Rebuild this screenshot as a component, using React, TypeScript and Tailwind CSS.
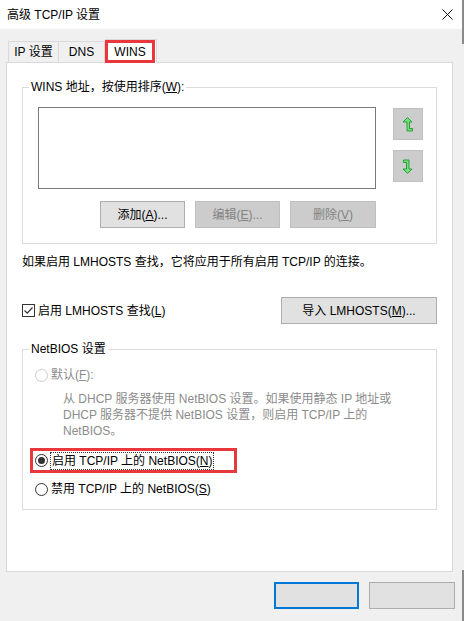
import React from 'react';

const font = "font-['Liberation_Sans','Noto_Sans_CJK_SC',sans-serif]";

// small win32-ish controls
const Radio = ({ checked = false, disabled = false }: { checked?: boolean; disabled?: boolean }) => (
  <span
    className={`flex h-[13px] w-[13px] shrink-0 items-center justify-center rounded-full border bg-white ${
      disabled ? 'border-[#cccccc]' : 'border-[#333333]'
    }`}
  >
    {checked && <span className="h-[7px] w-[7px] rounded-full bg-[#333333]" />}
  </span>
);

const Checkbox = () => (
  <span className="flex h-[13px] w-[13px] shrink-0 items-center justify-center border border-[#333333] bg-white">
    <svg width="11" height="11" viewBox="0 0 11 11" fill="none">
      <path d="M1.5 5.5L4.2 8.2L9.5 2.5" stroke="#333333" strokeWidth="1.2" />
    </svg>
  </span>
);

const Btn = ({
  children,
  disabled = false,
  className = '',
}: {
  children?: React.ReactNode;
  disabled?: boolean;
  className?: string;
}) => (
  <div
    className={`flex h-[27px] items-center justify-center border text-[12px] ${
      disabled ? 'border-[#bfbfbf] bg-[#cccccc] text-[#838383]' : 'border-[#adadad] bg-[#e1e1e1] text-black'
    } ${className}`}
  >
    {children}
  </div>
);

const UpArrow = () => (
  <svg width="12" height="17" viewBox="0 0 12 17">
    <path
      d="M5.5 1.5L10 6H7.5V12.5H10.5V15H5V6H1Z"
      fill="#6fe07a"
      stroke="#2f9d3b"
      strokeWidth="1"
      strokeLinejoin="miter"
    />
  </svg>
);

const DownArrow = () => (
  <svg width="12" height="17" viewBox="0 0 12 17">
    <path
      d="M1.5 2H7V11H10L5.5 15.5L1 11H4.5V4.5H1.5Z"
      fill="#6fe07a"
      stroke="#2f9d3b"
      strokeWidth="1"
      strokeLinejoin="miter"
    />
  </svg>
);

export default function App() {
  return (
    <div className={`relative h-[621px] w-[464px] overflow-hidden bg-[#f0f0f0] text-[12px] text-black ${font}`}>
      {/* window edge bits */}
      <span className="absolute right-0 top-0 h-[44px] w-[2px] bg-[#8a8a8a]" />
      <span className="absolute bottom-0 right-0 h-[51px] w-[2px] bg-[#8a8a8a]" />

      {/* title bar */}
      <div className="flex h-[29px] items-center justify-between bg-white pl-[7px] pr-[11px]">
        <span className="leading-[16px]">高级 TCP/IP 设置</span>
        <svg width="11" height="11" viewBox="0 0 11 11">
          <path d="M0.5 0.5L10.5 10.5M10.5 0.5L0.5 10.5" stroke="#111111" strokeWidth="1" />
        </svg>
      </div>

      {/* tabs */}
      <div className="mt-[10px] flex h-[23px] items-end pl-[8px]">
        <div className="flex h-[21px] w-[51px] items-center justify-center border border-b-0 border-[#d9d9d9]">
          IP 设置
        </div>
        <div className="flex h-[21px] w-[46px] items-center justify-center border border-b-0 border-l-0 border-[#d9d9d9]">
          DNS
        </div>
        <div className="relative z-10 -mb-px flex h-[24px] w-[52px] items-start border border-b-0 border-l-0 border-[#d9d9d9] bg-white">
          <div className="flex h-[23px] w-[50px] items-center justify-center border-[3px] border-[#e8383d]">WINS</div>
        </div>
      </div>

      {/* tab panel */}
      <div className="mx-[6px] h-[510px] w-[447px] border border-[#d9d9d9] bg-white px-[15px]">
        {/* WINS group */}
        <div className="relative mt-[24px] h-[157px] border border-[#dcdcdc]">
          <span className="absolute -top-[9px] left-[6px] bg-white px-[2px] leading-[16px]">
            WINS 地址，按使用排序(<u>W</u>):
          </span>
          <div className="flex pl-[15px] pt-[19px]">
            <div className="h-[82px] w-[338px] border border-[#7a7a7a] bg-white" />
            <div className="ml-[17px] flex flex-col gap-[10px] pt-[1px]">
              <div className="flex h-[32px] w-[30px] items-center justify-center border border-[#bfbfbf] bg-[#cccccc]">
                <UpArrow />
              </div>
              <div className="flex h-[32px] w-[30px] items-center justify-center border border-[#bfbfbf] bg-[#cccccc]">
                <DownArrow />
              </div>
            </div>
          </div>
          <div className="mt-[12px] flex gap-[10px] pl-[77px]">
            <Btn className="w-[85px]">
              添加(<u>A</u>)...
            </Btn>
            <Btn disabled className="w-[85px]">
              编辑(<u>E</u>)...
            </Btn>
            <Btn disabled className="w-[86px]">
              删除(<u>V</u>)
            </Btn>
          </div>
        </div>

        <p className="mt-[10px] leading-[16px]">如果启用 LMHOSTS 查找，它将应用于所有启用 TCP/IP 的连接。</p>

        <div className="mt-[27px] flex items-center justify-between">
          <div className="flex items-center gap-[3px]">
            <Checkbox />
            <span className="leading-[16px]">
              启用 LMHOSTS 查找(<u>L</u>)
            </span>
          </div>
          <Btn className="w-[156px]">
            导入 LMHOSTS(<u>M</u>)...
          </Btn>
        </div>

        {/* NetBIOS group */}
        <div className="relative mt-[25px] h-[161px] border border-[#dcdcdc]">
          <span className="absolute -top-[9px] left-[6px] bg-white px-[2px] leading-[16px]">NetBIOS 设置</span>
          <div className="flex items-center gap-[3px] pl-[12px] pt-[17px] text-[#8c8c8c]">
            <Radio disabled />
            <span className="leading-[16px]">
              默认(<u>F</u>):
            </span>
          </div>
          <p className="mt-[8px] pl-[40px] pr-[20px] leading-[16px] text-[#8c8c8c]">
            从 DHCP 服务器使用 NetBIOS 设置。如果使用静态 IP 地址或
            <br />
            DHCP 服务器不提供 NetBIOS 设置，则启用 TCP/IP 上的
            <br />
            NetBIOS。
          </p>
          <div className="ml-[7px] mt-[9px] flex h-[25px] w-[207px] items-center border-[3px] border-[#e8383d] pl-[2px]">
            <Radio checked />
            <span className="ml-[2px] border border-dotted border-[#333333] px-[1px] leading-[16px]">
              启用 TCP/IP 上的 NetBIOS(<u>N</u>)
            </span>
          </div>
          <div className="mt-[8px] flex items-center gap-[3px] pl-[12px]">
            <Radio />
            <span className="leading-[16px]">
              禁用 TCP/IP 上的 NetBIOS(<u>S</u>)
            </span>
          </div>
        </div>
      </div>

      {/* dialog buttons */}
      <div className="mt-[10px] flex justify-end gap-[10px] pr-[9px]">
        <div className="h-[27px] w-[85px] border-2 border-[#0078d7] bg-[#e1e1e1]" />
        <div className="h-[27px] w-[86px] border border-[#adadad] bg-[#e1e1e1]" />
      </div>
    </div>
  );
}
